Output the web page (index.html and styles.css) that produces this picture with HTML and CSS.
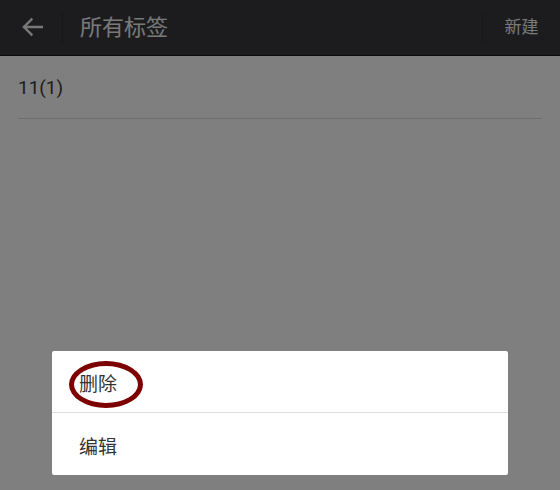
FILE: index.html
```html
<!DOCTYPE html>
<html lang="zh">
<head>
<meta charset="utf-8">
<link rel="stylesheet" href="styles.css">
</head>
<body>
<div class="page">
  <header class="topbar">
    <div class="back">
      <svg width="22" height="20" viewBox="0 0 22 20" aria-hidden="true">
        <path d="M21 10H3 M10.5 2.5L3 10l7.5 7.5" fill="none" stroke="#f0f0f0" stroke-width="2.4" stroke-linecap="square"/>
      </svg>
    </div>
    <div class="sep"></div>
    <h1 class="title">所有标签</h1>
    <div class="sep sep-right"></div>
    <div class="action">新建</div>
  </header>
  <ul class="tags">
    <li class="tag">11(1)</li>
  </ul>
</div>
<div class="overlay">
  <div class="dialog">
    <div class="item item-first">
      <span class="label">删除</span>
      <span class="mark"></span>
    </div>
    <div class="item">
      <span class="label">编辑</span>
    </div>
  </div>
</div>
</body>
</html>
```
FILE: styles.css
```css
html, body {
  margin: 0;
  padding: 0;
}
body {
  width: 560px;
  height: 490px;
  overflow: hidden;
  background: #ffffff;
  font-family: "Noto Sans CJK SC", "Noto Sans", Roboto, sans-serif;
}
.page {
  height: 490px;
  background: #ffffff;
}
.topbar {
  height: 56px;
  background: #38393d;
  border-bottom: 1px solid #141414;
  display: flex;
  align-items: center;
  box-sizing: border-box;
}
.back {
  width: 62px;
  display: flex;
  align-items: center;
  padding-left: 21px;
  box-sizing: border-box;
}
.back svg {
  display: block;
  margin-top: -1px;
}
.sep {
  width: 1px;
  height: 30px;
  background: #2c2d30;
}
.title {
  margin: 0 0 0 17px;
  flex: 1;
  font-weight: normal;
  font-size: 22px;
  color: #f2f2f2;
  line-height: 1;
  position: relative;
  top: -3px;
}
.action {
  width: 77px;
  text-align: center;
  font-size: 17px;
  color: #f2f2f2;
  position: relative;
  top: -2px;
}
.tags {
  list-style: none;
  margin: 0;
  padding: 0 18px;
}
.tag {
  height: 62px;
  border-bottom: 1px solid #dcdcdc;
  display: flex;
  align-items: center;
  font-family: Roboto, "Noto Sans", sans-serif;
  font-size: 19px;
  color: #3a3a3a;
}
.overlay {
  position: fixed;
  inset: 0;
  background: rgba(0, 0, 0, 0.5);
  display: flex;
  flex-direction: column;
  justify-content: flex-end;
  align-items: center;
  padding-bottom: 15px;
  box-sizing: border-box;
}
.dialog {
  width: 456px;
  background: #ffffff;
  border-radius: 2px;
}
.item {
  height: 62px;
  display: flex;
  align-items: center;
  padding-left: 27px;
  font-size: 19px;
  color: #333333;
  position: relative;
}
.item-first {
  border-bottom: 1px solid #dedede;
  height: 61px;
}
.label {
  position: relative;
  top: 1px;
}
.mark {
  position: absolute;
  left: 17px;
  top: 10px;
  width: 64px;
  height: 37px;
  border: 5px solid #7d0000;
  border-radius: 50%;
}
```
